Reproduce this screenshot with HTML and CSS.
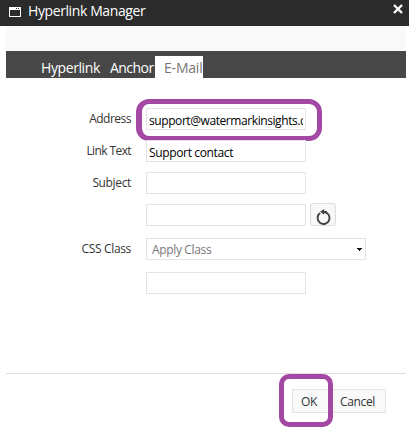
FILE: index.html
```html
<!DOCTYPE html>
<html lang="en">
<head>
<meta charset="utf-8">
<title>Hyperlink Manager</title>
<link rel="stylesheet" href="styles.css">
</head>
<body>
<div class="dialog">
  <header class="titlebar">
    <svg class="window-icon" width="12" height="10" viewBox="0 0 12 10" shape-rendering="crispEdges"><path fill="#fff" fill-rule="evenodd" d="M0 0h12v10H0zM1 3v6h10V3zM7 1v1h1V1zM9 1v1h1V1z"/></svg>
    <h1 class="title">Hyperlink Manager</h1>
    <svg class="close-icon" width="10" height="10" viewBox="0 0 10 10"><path stroke="#fff" stroke-width="2.4" d="M1 1l8 8M9 1L1 9"/></svg>
  </header>
  <div class="toolbar"></div>
  <nav class="tabs">
    <span class="tab tab-link">Hyperlink</span>
    <span class="tab tab-anchor">Anchor</span>
    <span class="tab tab-mail">E-Mail</span>
  </nav>
  <main class="form">
    <div class="row"><label class="tight">Address</label><div class="field marked"><span class="clip">support@watermarkinsights.com</span></div></div>
    <div class="row"><label class="tighter">Link Text</label><div class="field">Support contact</div></div>
    <div class="row"><label>Subject</label><div class="field"></div></div>
    <div class="row"><label></label><div class="field"></div>
      <div class="reset"><svg width="16" height="17" viewBox="0 0 16 17"><path fill="none" stroke="#444" stroke-width="1.9" d="M4.1 4.1A6 6 0 1 0 8 3h3"/><path fill="#444" d="M4 2.8L8.2 0v5.8z"/></svg></div>
    </div>
    <div class="row css-row"><label>CSS Class</label><div class="field select"><span>Apply Class</span><svg width="5" height="3" viewBox="0 0 5 3" shape-rendering="crispEdges"><path d="M0 0h5v1H0zM1 1h3v1H1zM2 2h1v1H2z"/></svg></div></div>
    <div class="row css-row"><label></label><div class="field"></div></div>
  </main>
  <footer class="actions">
    <div class="button ok">OK</div>
    <div class="button cancel">Cancel</div>
  </footer>
</div>
</body>
</html>
```
FILE: styles.css
```css
* { box-sizing: border-box; }
body {
  margin: 0;
  background: #fff;
  color: #333;
  font: 12px/20px "Open Sans", "Noto Sans", sans-serif;
  letter-spacing: -0.35px;
  white-space: nowrap;
}
.dialog { width: 409px; height: 435px; overflow: hidden; }
.titlebar {
  display: flex;
  height: 26px;
  padding: 0 6px 0 9px;
  background: #2b2b2b;
  color: #fff;
}
.window-icon { margin-top: 7px; }
.title { flex: 1; margin: 0 0 0 7px; font-size: 14px; font-weight: 400; line-height: 21px; letter-spacing: -0.4px; }
.close-icon { margin-top: 4px; }
.toolbar { height: 25px; margin: 0 3px 0 6px; background: #f9f9f9; }
.tabs {
  display: flex;
  height: 27px;
  margin: 0 3px 0 6px;
  padding-left: 35px;
  background: #474747;
  color: #fff;
  font-size: 14px;
  line-height: 33px;
  letter-spacing: -0.4px;
}
.tab-link { width: 69px; }
.tab-anchor { width: 45px; letter-spacing: -0.55px; }
.tab-mail {
  width: 48px;
  height: 22px;
  margin-top: 5px;
  padding-left: 9px;
  overflow: hidden;
  background: #fff;
  color: #777;
  line-height: 23px;
  letter-spacing: -0.2px;
}
.form { display: flex; flex-direction: column; gap: 10px; height: 295px; padding-top: 30px; }
.row { display: flex; height: 22px; }
.css-row { margin-top: 2px; }
label { width: 131px; margin-right: 15px; text-align: right; line-height: 22px; }
.tight { letter-spacing: -0.5px; }
.tighter { letter-spacing: -0.6px; }
.field {
  position: relative;
  width: 160px;
  height: 22px;
  padding: 0 2px;
  border: 1px solid #e4e4e4;
  color: #000;
  line-height: 23px;
}
.clip { display: block; overflow: hidden; letter-spacing: -0.42px; }
.marked::after {
  content: "";
  position: absolute;
  inset: -10px -17px -12px -11px;
  border: 5px solid #a349a4;
  border-left-width: 6px;
  border-radius: 13px;
}
.select { display: flex; width: 220px; padding: 0 3px 0 5px; justify-content: space-between; align-items: center; color: #777; }
.reset {
  width: 26px;
  height: 23px;
  margin: -1px 0 0 4px;
  padding: 5px 0 0 5px;
  border: 1px solid #dedede;
  border-radius: 3px;
  background: #f8f8f8;
}
.reset svg { display: block; }
.actions {
  display: flex;
  justify-content: flex-end;
  height: 62px;
  margin: 0 3px 0 6px;
  padding: 15px 20px 0 0;
  border-top: 1px solid #dfdfdf;
}
.button { position: relative; height: 24px; border: 1px solid #e4e4e4; background: #f9f9f9; line-height: 24px; }
.ok { width: 38px; padding-left: 8px; }
.cancel { width: 56px; padding-left: 9px; }
.ok::after {
  content: "";
  position: absolute;
  z-index: 1;
  inset: -16px -4px -15px -14px;
  border: 5px solid #a349a4;
  border-radius: 10px;
}
```
